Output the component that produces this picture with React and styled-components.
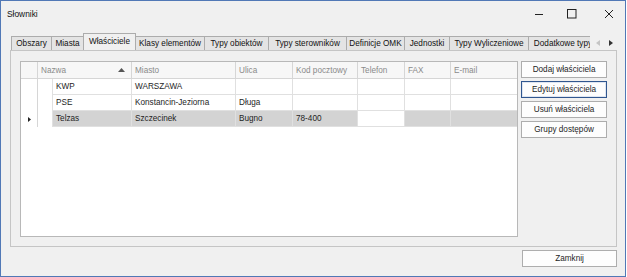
import React from 'react';
import styled, { createGlobalStyle } from 'styled-components';

const GlobalStyle = createGlobalStyle`
  html, body {
    margin: 0;
    padding: 0;
    background: #ffffff;
  }
  body {
    font-family: "Liberation Sans", Arial, sans-serif;
    font-size: 8.2px;
    color: #1e1e1e;
  }
  * {
    box-sizing: border-box;
  }
`;

const tabs = [
  { name: 'Obszary', w: 41 },
  { name: 'Miasta', w: 33 },
  { name: 'Właściciele', w: 53, active: true },
  { name: 'Klasy elementów', w: 70 },
  { name: 'Typy obiektów', w: 65 },
  { name: 'Typy sterowników', w: 79 },
  { name: 'Definicje OMK', w: 59 },
  { name: 'Jednostki', w: 46 },
  { name: 'Typy Wyliczeniowe', w: 80 },
  { name: 'Dodatkowe typy', w: 70 },
];

const columns = [
  { key: 'nazwa', title: 'Nazwa', w: 94, sorted: true },
  { key: 'miasto', title: 'Miasto', w: 104 },
  { key: 'ulica', title: 'Ulica', w: 57 },
  { key: 'kod', title: 'Kod pocztowy', w: 65 },
  { key: 'telefon', title: 'Telefon', w: 47 },
  { key: 'fax', title: 'FAX', w: 46 },
  { key: 'email', title: 'E-mail', w: 0 },
];

const rows = [
  { nazwa: 'KWP', miasto: 'WARSZAWA', ulica: '', kod: '', telefon: '', fax: '', email: '' },
  { nazwa: 'PSE', miasto: 'Konstancin-Jeziorna', ulica: 'Długa', kod: '', telefon: '', fax: '', email: '' },
  { nazwa: 'Telzas', miasto: 'Szczecinek', ulica: 'Bugno', kod: '78-400', telefon: '', fax: '', email: '', selected: true },
];

const actions = [
  { label: 'Dodaj właściciela' },
  { label: 'Edytuj właściciela', focused: true },
  { label: 'Usuń właściciela' },
  { label: 'Grupy dostępów' },
];

const App = () => {
  return (
    <>
      <GlobalStyle />
      <Window>
        <TitleBar>
          <Title>Słowniki</Title>
          <Controls>
            <ControlBox $gap={0}>
              <svg width="10" height="10" viewBox="0 0 10 10">
                <line x1="1" y1="5.5" x2="9" y2="5.5" stroke="#222" strokeWidth="1" />
              </svg>
            </ControlBox>
            <ControlBox $gap={13}>
              <svg width="10" height="10" viewBox="0 0 10 10">
                <rect x="0.5" y="0.5" width="8.5" height="8.5" fill="none" stroke="#222" strokeWidth="1" />
              </svg>
            </ControlBox>
            <ControlBox $gap={17}>
              <svg width="10" height="10" viewBox="0 0 10 10">
                <path d="M1 1 L9 9 M9 1 L1 9" stroke="#222" strokeWidth="1" />
              </svg>
            </ControlBox>
          </Controls>
        </TitleBar>

        <Body>
          <TabStrip>
            <TabList>
              {tabs.map(tab => (
                <Tab key={tab.name} $w={tab.w} $active={tab.active}>
                  {tab.name}
                </Tab>
              ))}
            </TabList>
            <TabArrows>
              <svg width="4" height="6" viewBox="0 0 4 6">
                <path d="M4 0 L0 3 L4 6 Z" fill="#c4c4c4" />
              </svg>
              <svg width="4" height="6" viewBox="0 0 4 6">
                <path d="M0 0 L4 3 L0 6 Z" fill="#333" />
              </svg>
            </TabArrows>
          </TabStrip>

          <Panel>
            <Grid>
              <HeaderRow>
                <IndicatorCell $header />
                {columns.map(col => (
                  <HeaderCell key={col.key} $w={col.w}>
                    <span>{col.title}</span>
                    {col.sorted && (
                      <svg width="7" height="4" viewBox="0 0 7 4">
                        <path d="M0 4 L3.5 0 L7 4 Z" fill="#555" />
                      </svg>
                    )}
                  </HeaderCell>
                ))}
              </HeaderRow>
              {rows.map(row => (
                <DataRow key={row.nazwa}>
                  <IndicatorCell>
                    {row.selected && (
                      <svg width="3" height="5" viewBox="0 0 3 5">
                        <path d="M0 0 L3 2.5 L0 5 Z" fill="#222" />
                      </svg>
                    )}
                  </IndicatorCell>
                  <IndentCell />
                  {columns.map((col, i) => (
                    <Cell
                      key={col.key}
                      $w={i === 0 ? col.w - 15 : col.w}
                      $selected={row.selected && col.key !== 'telefon'}
                    >
                      {row[col.key]}
                    </Cell>
                  ))}
                </DataRow>
              ))}
            </Grid>

            <Actions>
              {actions.map(action => (
                <ActionButton key={action.label} $focused={action.focused}>
                  {action.label}
                </ActionButton>
              ))}
            </Actions>
          </Panel>

          <Footer>
            <CloseButton>Zamknij</CloseButton>
          </Footer>
        </Body>
      </Window>
    </>
  );
};

export default App;

const Window = styled.div`
  width: 626px;
  height: 277px;
  border: 1px solid #5178b6;
  background: #f0f0f0;
  display: flex;
  flex-direction: column;
`;

const TitleBar = styled.div`
  height: 26px;
  display: flex;
  align-items: center;
  justify-content: space-between;
  padding: 0 6px 0 6px;
`;

const Title = styled.div`
  font-size: 8.4px;
  color: #111;
`;

const Controls = styled.div`
  display: flex;
  align-items: center;
`;

const ControlBox = styled.div`
  width: 20px;
  height: 20px;
  margin-left: ${p => p.$gap}px;
  display: flex;
  align-items: center;
  justify-content: center;
`;

const Body = styled.div`
  flex: 1;
  display: flex;
  flex-direction: column;
  padding: 6px 8px 0 9px;
`;

const TabStrip = styled.div`
  height: 17px;
  display: flex;
  align-items: flex-end;
  padding-left: 1px;
`;

const TabList = styled.div`
  width: 579px;
  height: 100%;
  display: flex;
  align-items: flex-end;
  overflow: hidden;
`;

const Tab = styled.div`
  flex: none;
  width: ${p => p.$w}px;
  height: ${p => (p.$active ? 18 : 14)}px;
  margin-right: -1px;
  margin-bottom: ${p => (p.$active ? -1 : 0)}px;
  position: relative;
  z-index: ${p => (p.$active ? 1 : 0)};
  border: 1px solid #acacac;
  border-bottom: none;
  background: ${p => (p.$active ? '#f0f0f0' : '#e4e4e4')};
  display: flex;
  align-items: ${p => (p.$active ? 'flex-start' : 'center')};
  padding-top: ${p => (p.$active ? 3 : 0)}px;
  justify-content: center;
  white-space: nowrap;
  color: #111;
`;

const TabArrows = styled.div`
  flex: 1;
  height: 14px;
  display: flex;
  align-items: center;
  justify-content: flex-end;
  gap: 9px;
  padding-right: 4px;
`;

const Panel = styled.div`
  height: 197px;
  border: 1px solid #c5c5c5;
  padding: 10px 9px 8px 9px;
  display: flex;
  gap: 3px;
`;

const Grid = styled.div`
  width: 499px;
  height: 176px;
  border: 1px solid #b8b8b8;
  background: #ffffff;
  display: flex;
  flex-direction: column;
`;

const HeaderRow = styled.div`
  height: 17px;
  display: flex;
  background: #f7f7f7;
  border-bottom: 1px solid #d6d6d6;
`;

const HeaderCell = styled.div`
  ${p => (p.$w ? `width: ${p.$w}px; flex: none;` : 'flex: 1;')}
  display: flex;
  align-items: center;
  justify-content: space-between;
  padding: 0 6px 0 3px;
  border-right: ${p => (p.$w ? '1px solid #d6d6d6' : 'none')};
  color: #8a8a8a;
  white-space: nowrap;
`;

const DataRow = styled.div`
  height: 16px;
  display: flex;
`;

const IndicatorCell = styled.div`
  width: 17px;
  flex: none;
  display: flex;
  align-items: center;
  justify-content: center;
  border-right: 1px solid #d6d6d6;
  background: ${p => (p.$header ? '#f7f7f7' : '#ffffff')};
`;

const IndentCell = styled.div`
  width: 15px;
  flex: none;
  border-right: 1px solid #e0e0e0;
`;

const Cell = styled.div`
  ${p => (p.$w ? `width: ${p.$w}px; flex: none;` : 'flex: 1;')}
  display: flex;
  align-items: center;
  padding: 0 3px;
  border-right: ${p => (p.$w ? '1px solid #e0e0e0' : 'none')};
  border-bottom: 1px solid #e0e0e0;
  background: ${p => (p.$selected ? '#d3d3d3' : '#ffffff')};
  color: #1e1e1e;
  white-space: nowrap;
  overflow: hidden;
`;

const Actions = styled.div`
  width: 86px;
  display: flex;
  flex-direction: column;
  gap: 3px;
`;

const ActionButton = styled.div`
  height: 17px;
  display: flex;
  align-items: center;
  justify-content: center;
  background: #fdfdfd;
  border: 1px solid ${p => (p.$focused ? '#30568f' : '#adadad')};
  box-shadow: ${p => (p.$focused ? 'inset 0 0 0 1px #dfe6f1' : 'none')};
  color: #1e1e1e;
  white-space: nowrap;
`;

const Footer = styled.div`
  display: flex;
  justify-content: flex-end;
  padding-top: 3px;
`;

const CloseButton = styled.div`
  width: 95px;
  height: 17px;
  display: flex;
  align-items: center;
  justify-content: center;
  background: #fdfdfd;
  border: 1px solid #adadad;
  color: #1e1e1e;
`;
